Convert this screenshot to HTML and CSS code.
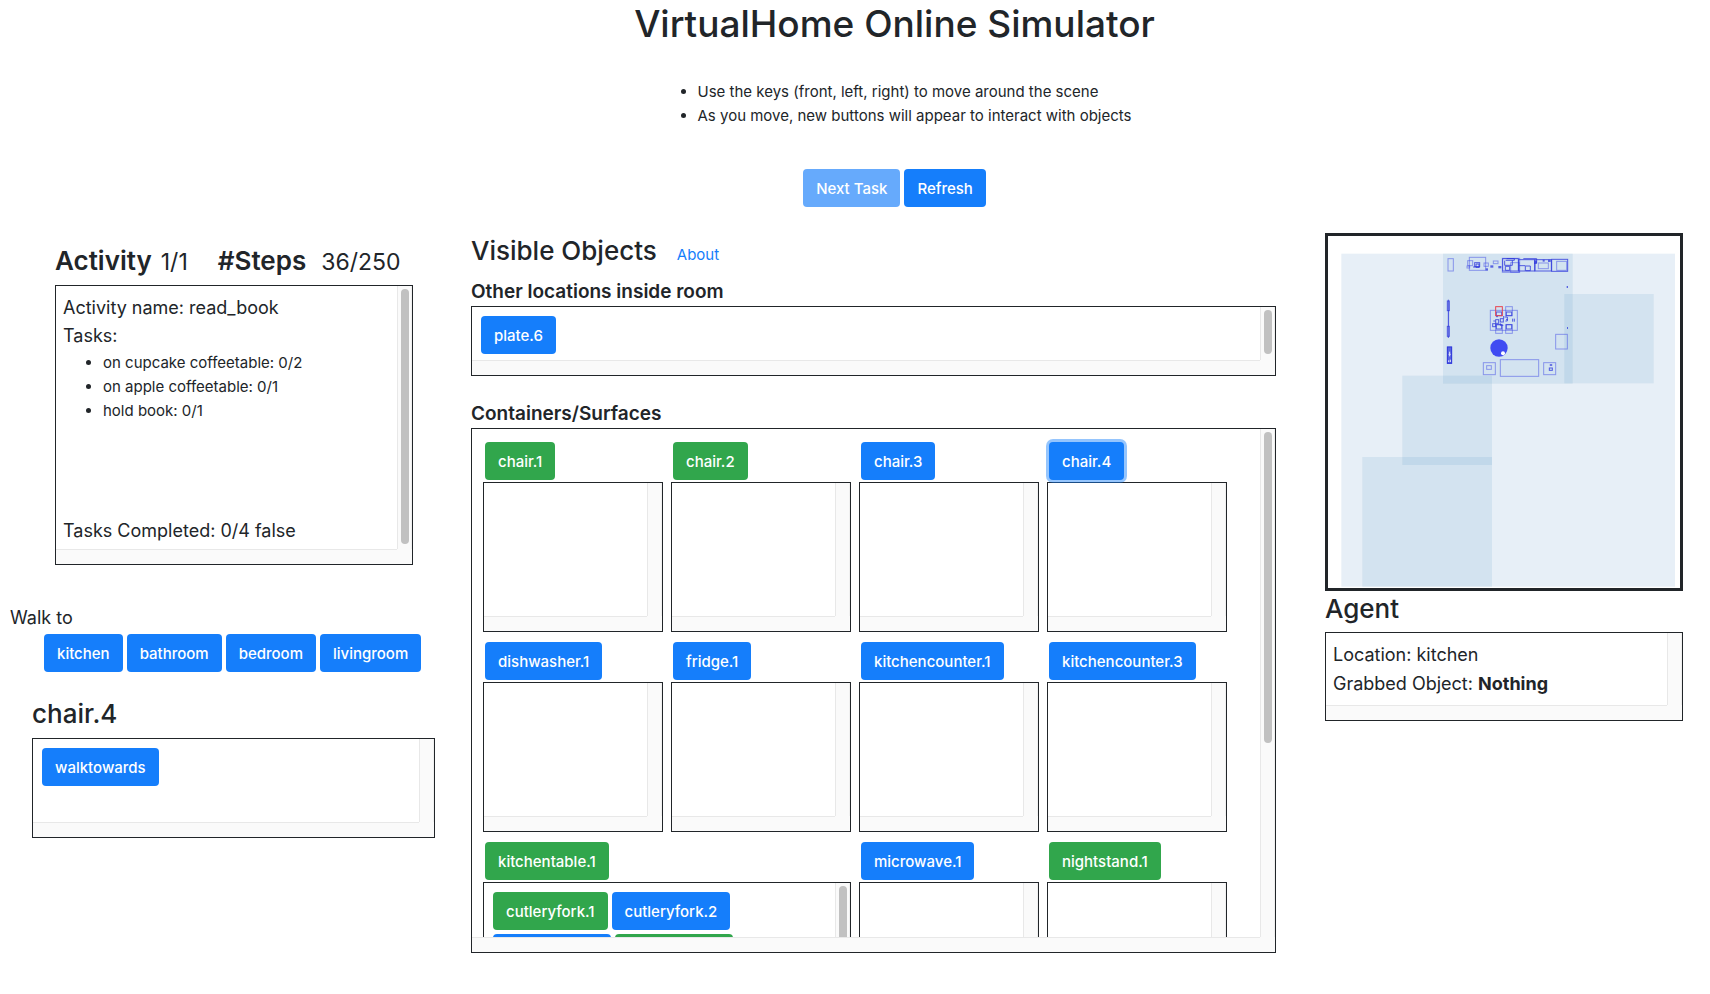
FILE: index.html
```html
<!DOCTYPE html>
<html lang="en">
<head>
<meta charset="utf-8">
<title>VirtualHome Online Simulator</title>
<link rel="stylesheet" href="styles.css">
</head>
<body>
<header class="intro">
  <h1 class="title">VirtualHome Online Simulator</h1>
  <ul class="list intro-list">
    <li>Use the keys (front, left, right) to move around the scene</li>
    <li>As you move, new buttons will appear to interact with objects</li>
  </ul>
  <div class="buttons">
    <button class="btn" type="button" disabled>Next Task</button>
    <button class="btn" type="button">Refresh</button>
  </div>
</header>
<main class="columns">
  <section class="side">
    <div class="activity">
      <div class="status">
        <h3 class="heading strong">Activity</h3><span class="count">1/1</span>
        <h3 class="heading strong steps">#Steps</h3><span class="count wide">36/250</span>
      </div>
      <div class="frame activity-frame">
        <div class="view text-view">
          <p class="text">Activity name: read_book</p>
          <p class="text">Tasks:</p>
          <ul class="list tasks">
            <li>on cupcake coffeetable: 0/2</li>
            <li>on apple coffeetable: 0/1</li>
            <li>hold book: 0/1</li>
          </ul>
          <p class="text completed">Tasks Completed: 0/4 false</p>
        </div>
        <div class="track"><div class="thumb thumb-activity"></div></div>
      </div>
    </div>
    <p class="text walk-label">Walk to</p>
    <div class="buttons walk-buttons">
      <button class="btn" type="button">kitchen</button>
      <button class="btn" type="button">bathroom</button>
      <button class="btn" type="button">bedroom</button>
      <button class="btn" type="button">livingroom</button>
    </div>
    <div class="selected">
      <h3 class="heading">chair.4</h3>
      <div class="frame selected-frame">
        <div class="view"><div class="buttons objects"><button class="btn" type="button">walktowards</button></div></div>
        <div class="track"></div>
      </div>
    </div>
  </section>

  <section class="visible">
    <div class="visible-head">
      <h3 class="heading">Visible Objects</h3>
      <a class="about" href="#about">About</a>
    </div>
    <h4 class="label">Other locations inside room</h4>
    <div class="frame other-frame">
      <div class="view"><div class="buttons objects"><button class="btn" type="button">plate.6</button></div></div>
      <div class="track"><div class="thumb thumb-other"></div></div>
    </div>
    <h4 class="label containers-label">Containers/Surfaces</h4>
    <div class="frame containers-frame">
      <div class="view">
        <div class="cells">
          <div class="cell"><button class="btn green" type="button">chair.1</button><div class="frame cell-frame"><div class="view"></div><div class="track"></div></div></div>
          <div class="cell"><button class="btn green" type="button">chair.2</button><div class="frame cell-frame"><div class="view"></div><div class="track"></div></div></div>
          <div class="cell"><button class="btn" type="button">chair.3</button><div class="frame cell-frame"><div class="view"></div><div class="track"></div></div></div>
          <div class="cell"><button class="btn focused" type="button">chair.4</button><div class="frame cell-frame"><div class="view"></div><div class="track"></div></div></div>
          <div class="cell"><button class="btn" type="button">dishwasher.1</button><div class="frame cell-frame"><div class="view"></div><div class="track"></div></div></div>
          <div class="cell"><button class="btn" type="button">fridge.1</button><div class="frame cell-frame"><div class="view"></div><div class="track"></div></div></div>
          <div class="cell"><button class="btn" type="button">kitchencounter.1</button><div class="frame cell-frame"><div class="view"></div><div class="track"></div></div></div>
          <div class="cell"><button class="btn" type="button">kitchencounter.3</button><div class="frame cell-frame"><div class="view"></div><div class="track"></div></div></div>
          <div class="cell double"><button class="btn green" type="button">kitchentable.1</button>
            <div class="frame cell-frame">
              <div class="view">
                <div class="buttons objects">
                  <button class="btn green" type="button">cutleryfork.1</button>
                  <button class="btn" type="button">cutleryfork.2</button>
                </div>
                <div class="buttons objects next-row">
                  <button class="btn" type="button"><span class="blank-long"></span></button>
                  <button class="btn green" type="button"><span class="blank-long"></span></button>
                </div>
              </div>
              <div class="track"><div class="thumb thumb-table"></div></div>
            </div>
          </div>
          <div class="cell"><button class="btn" type="button">microwave.1</button><div class="frame cell-frame"><div class="view"></div><div class="track"></div></div></div>
          <div class="cell"><button class="btn green" type="button">nightstand.1</button><div class="frame cell-frame"><div class="view"></div><div class="track"></div></div></div>
        </div>
      </div>
      <div class="track"><div class="thumb thumb-containers"></div></div>
    </div>
  </section>

  <section class="agent">
    <svg class="map" viewBox="54 48 1056 1056" role="img" aria-label="Apartment map">
      <rect x="94" y="101" width="1001" height="999" fill="#e7eff7"/>
      <g fill="#4a90be" fill-opacity=".13">
        <rect x="399" y="101" width="389" height="390"/>
        <rect x="763" y="222" width="268" height="268"/>
        <rect x="277" y="467" width="269" height="268"/>
        <rect x="157" y="711" width="389" height="389"/>
      </g>
      <g fill="none" stroke="#3c46e6" stroke-width="3" stroke-opacity=".5">
        <rect x="414" y="116" width="16" height="37"/>
        <rect x="478" y="112" width="49" height="39"/>
        <rect x="577" y="115" width="52" height="42"/>
        <rect x="541" y="271" width="81" height="60"/>
        <rect x="587" y="260" width="20" height="27"/>
        <rect x="557" y="314" width="20" height="26"/>
        <rect x="587" y="314" width="20" height="26"/>
        <rect x="737" y="343" width="35" height="44"/>
        <rect x="571" y="419" width="115" height="50"/>
        <rect x="520" y="428" width="36" height="36"/>
        <rect x="701" y="428" width="36" height="36"/>
        <rect x="530" y="437" width="14" height="11"/>
        <rect x="550" y="123" width="14" height="8"/>
        <rect x="522" y="129" width="13" height="10"/>
        <rect x="740" y="124" width="30" height="27"/>
        <rect x="685" y="129" width="30" height="17"/>
        <rect x="471" y="138" width="8" height="6"/>
        <rect x="473" y="122" width="15" height="15"/>
        <rect x="602" y="128" width="26" height="29"/>
        <path d="M416 270V320"/>
      </g>
      <g fill="none" stroke="#2f38dc" stroke-width="3" stroke-opacity=".8">
        <rect x="412" y="243" width="6" height="29"/><path d="M415 239V354"/>
        <rect x="412" y="319" width="6" height="30"/>
        <rect x="626" y="119" width="48" height="34"/>
        <rect x="675" y="119" width="49" height="34"/>
        <rect x="725" y="118" width="48" height="36"/>
        <rect x="578" y="116" width="47" height="37"/>
        <path d="M590 116H613V121H587M607 121V136H584V122M586 139H599V151H586ZM628 137H646V153M648 138H661V152H648M640 116H680V130H672"/>
        <rect x="494" y="128" width="15" height="12"/>
        <path d="M498 132H507V142H498ZM489 141H510"/>
        <rect x="559" y="276" width="16" height="11"/>
        <rect x="589" y="276" width="16" height="11"/>
        <rect x="559" y="314" width="16" height="13"/>
        <rect x="589" y="314" width="16" height="13"/>
        <rect x="548" y="311" width="9" height="9"/>
        <rect x="557" y="299" width="9" height="11"/>
        <rect x="571" y="296" width="9" height="10"/>
        <path d="M550 303H556M558 290H564M581 288V296M584 291H592V303H586M588 299H594M608 296V305M613 296V305M571 310V316H580"/>
        <rect x="718" y="444" width="9" height="7"/>
        <path d="M719 435H727M723 432V438"/>
      </g>
      <g fill="#2f38dc" fill-opacity=".75">
        <rect x="411" y="380" width="15" height="51"/>
        <rect x="541" y="136" width="9" height="7"/><rect x="565" y="138" width="9" height="7"/>
        <rect x="527" y="145" width="7" height="7"/><rect x="673" y="122" width="8" height="8"/>
        <rect x="698" y="119" width="6" height="6"/><rect x="714" y="119" width="8" height="7"/>
        <rect x="770" y="198" width="4" height="6"/><rect x="771" y="321" width="3" height="6"/>
      </g>
      <rect x="412" y="381" width="13" height="49" fill="none" stroke="#2f38dc" stroke-width="3"/>
      <path d="M419 395V409M416 403H422M416 421V426M421 419V426" fill="none" stroke="#dfe5fb" stroke-width="3"/>
      <rect x="557" y="260" width="20" height="27" fill="none" stroke="#e8424f" stroke-width="3"/>
      <circle cx="567" cy="384" r="26" fill="#404bf2"/>
      <circle cx="579" cy="400" r="6" fill="#fff"/>
    </svg>
    <h3 class="heading">Agent</h3>
    <div class="frame agent-frame">
      <div class="view text-view">
        <p class="text">Location: kitchen</p>
        <p class="text">Grabbed Object: <b>Nothing</b></p>
      </div>
      <div class="track"></div>
    </div>
  </section>
</main>
</body>
</html>
```
FILE: styles.css
```css
* { box-sizing: border-box; }
body { margin: 0; color: #212529; background: #fff; font: 400 15px/24px Inter, "Liberation Sans", sans-serif; }
h1, h3, h4, p, ul { margin: 0; }

.intro { display: flex; flex-direction: column; align-items: center; padding-left: 79px; }
.title { font-size: 37px; font-weight: 500; line-height: 48px; }
.list { padding-left: 40px; }
.intro-list { margin-top: 32px; }
.intro .buttons { margin-top: 41px; }

.buttons { display: flex; gap: 4px; }
.btn { height: 38px; padding: 1px 13px 0; border: 0; border-radius: 4px; background: #157efb; color: #fff; font: inherit; font-weight: 500; white-space: nowrap; }
.btn:disabled { opacity: .65; }
.green { background: #31a64c; }
.focused { position: relative; z-index: 1; box-shadow: 0 0 0 3px rgba(21, 126, 251, .45); }

.columns { display: grid; grid-template-columns: minmax(0, 435fr) minmax(0, 805fr) minmax(0, 371fr); column-gap: 36px; padding: 26px 27px 40px 0; align-items: start; }
.heading { padding-top: 1px; font-size: 26px; font-weight: 500; line-height: 33px; }
.strong { font-weight: 600; }
.text { font-size: 18px; line-height: 29px; }
.label { font-size: 19px; font-weight: 600; line-height: 29px; }

.frame { display: grid; grid-template-columns: minmax(0, 1fr) 15px; border: 1px solid #212529; background: #fafafa; padding-bottom: 15px; }
.view { overflow: hidden; background: #fff; box-shadow: 0 1px #e8e8e8; }
.track { padding: 3px 2px 0 3px; border-left: 1px solid #e8e8e8; border-right: 1px solid #efefef; }
.thumb { width: 8px; border-radius: 4px; background: #c1c1c1; }
.thumb-activity { height: 255px; }
.thumb-other { height: 44px; }
.thumb-containers { height: 311px; }
.thumb-table { height: 120px; }
.text-view { padding: 7px 7px 0; }
.objects { padding: 9px 9px 0; }
.next-row { padding-top: 4px; }
.blank-long { display: inline-block; width: 92px; }

.activity { margin: 10px 22px 0 55px; }
.status { display: flex; align-items: baseline; height: 34px; margin-bottom: 8px; }
.count { margin-left: 9px; font-size: 23px; line-height: 33px; }
.steps { margin-left: 30px; }
.wide { margin-left: 15px; }
.activity-frame { height: 280px; }
.activity-frame .text-view { padding-top: 8px; }
.activity-frame .text { line-height: 28px; }
.tasks { margin: 1px 0 94px; }
.walk-label { margin: 38px 0 2px 10px; }
.walk-buttons { padding-left: 44px; }
.selected { margin: 24px 0 0 32px; }
.selected-frame { height: 100px; margin-top: 8px; }

.visible-head { display: flex; align-items: flex-end; gap: 20px; margin-bottom: 10px; }
.about { color: #157efb; text-decoration: none; }
.other-frame { height: 70px; }
.containers-label { margin-top: 23px; }
.containers-frame { height: 525px; }
.cells { display: grid; grid-template-columns: repeat(4, minmax(0, 1fr)); gap: 10px 8px; padding: 13px 33px 0 11px; }
.cell .btn { display: block; }
.cell > .btn { margin-left: 2px; }
.double { grid-column: span 2; }
.cell-frame { height: 150px; margin-top: 2px; }

.agent { padding-left: 13px; }
.map { display: block; width: 100%; border: 3px solid #212529; }
.agent-frame { height: 89px; margin-top: 7px; }
```
